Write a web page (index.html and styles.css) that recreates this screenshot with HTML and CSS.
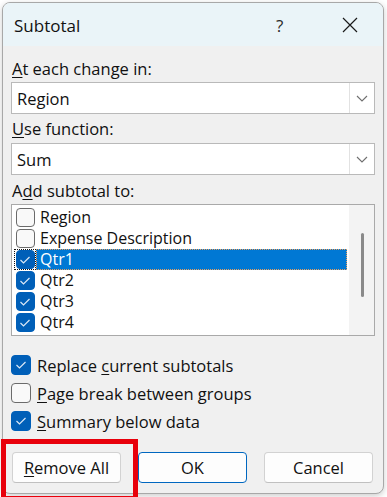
FILE: index.html
```html
<!DOCTYPE html>
<html>
<head>
<meta charset="utf-8">
<link rel="stylesheet" href="styles.css">
</head>
<body>
<div class="dialog">
  <div class="titlebar">
    <span class="title">Subtotal</span>
    <span class="help">?</span>
    <span class="close"><svg width="16" height="16" viewBox="0 0 16 16"><path d="M1 1 L15 15 M15 1 L1 15" stroke="#1a1a1a" stroke-width="1.2" fill="none"/></svg></span>
  </div>
  <div class="content">
    <div class="lbl l1"><u>A</u>t each change in:</div>
    <div class="select"><span class="val">Region</span><span class="drop"><svg width="12" height="7" viewBox="0 0 12 7"><path d="M1 1 L6 6 L11 1" stroke="#707070" stroke-width="1.1" fill="none"/></svg></span></div>
    <div class="lbl l2"><u>U</u>se function:</div>
    <div class="select"><span class="val">Sum</span><span class="drop"><svg width="12" height="7" viewBox="0 0 12 7"><path d="M1 1 L6 6 L11 1" stroke="#707070" stroke-width="1.1" fill="none"/></svg></span></div>
    <div class="lbl l3">A<u>d</u>d subtotal to:</div>
    <div class="list">
      <div class="items">
        <div class="row"><span class="cell"><span class="cb"></span></span><span class="txt">Region</span></div>
        <div class="row"><span class="cell"><span class="cb"></span></span><span class="txt">Expense Description</span></div>
        <div class="row focus"><span class="cell"><span class="cb on"><svg width="12" height="10" viewBox="0 0 12 10"><path d="M1.5 5 L4.5 8 L10.5 2" stroke="#dbe8f6" stroke-width="1.2" fill="none"/></svg></span></span><span class="txt">Qtr1</span></div>
        <div class="row"><span class="cell"><span class="cb on"><svg width="12" height="10" viewBox="0 0 12 10"><path d="M1.5 5 L4.5 8 L10.5 2" stroke="#dbe8f6" stroke-width="1.2" fill="none"/></svg></span></span><span class="txt">Qtr2</span></div>
        <div class="row"><span class="cell"><span class="cb on"><svg width="12" height="10" viewBox="0 0 12 10"><path d="M1.5 5 L4.5 8 L10.5 2" stroke="#dbe8f6" stroke-width="1.2" fill="none"/></svg></span></span><span class="txt">Qtr3</span></div>
        <div class="row"><span class="cell"><span class="cb on"><svg width="12" height="10" viewBox="0 0 12 10"><path d="M1.5 5 L4.5 8 L10.5 2" stroke="#dbe8f6" stroke-width="1.2" fill="none"/></svg></span></span><span class="txt">Qtr4</span></div>
      </div>
      <div class="scroll"><div class="thumb"></div></div>
    </div>
    <div class="opts">
      <div class="opt"><span class="cb on"><svg width="12" height="10" viewBox="0 0 12 10"><path d="M1.5 5 L4.5 8 L10.5 2" stroke="#dbe8f6" stroke-width="1.2" fill="none"/></svg></span><span>Replace <u>c</u>urrent subtotals</span></div>
      <div class="opt"><span class="cb"></span><span><u>P</u>age break between groups</span></div>
      <div class="opt"><span class="cb on"><svg width="12" height="10" viewBox="0 0 12 10"><path d="M1.5 5 L4.5 8 L10.5 2" stroke="#dbe8f6" stroke-width="1.2" fill="none"/></svg></span><span><u>S</u>ummary below data</span></div>
    </div>
    <div class="buttons">
      <div class="btn"><u>R</u>emove All</div>
      <div class="btn primary">OK</div>
      <div class="btn">Cancel</div>
    </div>
  </div>
</div>
<div class="mark"></div>
</body>
</html>
```
FILE: styles.css
```css
* { box-sizing: border-box; }
html, body { margin: 0; padding: 0; }
body {
  width: 387px;
  height: 497px;
  overflow: hidden;
  background: #ffffff;
  padding: 2px 0 0 2px;
  position: relative;
  font-family: "Open Sans", "Noto Sans", sans-serif;
  font-size: 16.5px;
  color: #111;
}
u { text-decoration: underline; text-underline-offset: 2px; text-decoration-thickness: 1px; }
.dialog {
  width: 382px;
  height: 492px;
  border: 1px solid #a8a8a8;
  border-radius: 8px;
  overflow: hidden;
  background: #f0f0f0;
  box-shadow: 0 2px 6px rgba(0,0,0,0.2);
}
.titlebar {
  height: 43px;
  background: #eaf4f8;
  display: flex;
  align-items: center;
  padding-left: 11px;
}
.title { font-size: 17px; flex: 1; padding-top: 2px; }
.help { font-size: 17px; width: 20px; margin-right: 46px; color: #2a2a2a; padding-top: 2px; }
.close { width: 16px; height: 16px; margin-right: 25px; display: flex; }
.content { padding: 13px 8px 0 8px; }
.lbl { height: 20px; line-height: 20px; padding-left: 1px; }
.l1 { margin-bottom: 3px; }
.l2 { margin-top: 5px; margin-bottom: 4px; }
.l3 { margin-top: 6px; margin-bottom: 3px; }
.select {
  height: 32px;
  background: #fff;
  border: 1px solid #b9b9b9;
  display: flex;
  align-items: center;
}
.val { flex: 1; padding-left: 5px; }
.drop {
  width: 25px;
  height: 30px;
  border-left: 1px solid #e2e2e2;
  display: flex;
  align-items: center;
  justify-content: center;
  padding-top: 1px;
}
.list {
  height: 132px;
  border: 1px solid #a9a9a9;
  background: #fff;
  display: flex;
}
.items { flex: 1; padding: 2px 2px 0 2px; }
.row { height: 21px; display: flex; align-items: stretch; font-size: 16px; }
.cell {
  width: 22px;
  display: flex;
  align-items: center;
  justify-content: center;
}
.row.focus .cell { outline: 1px dotted #111; outline-offset: -1px; }
.txt { flex: 1; padding-left: 4px; line-height: 20px; }
.row.focus .txt { background: #0078d4; color: #fff; outline: 1px dotted #e8a060; outline-offset: -1px; }
.cb {
  width: 19px;
  height: 19px;
  border: 1px solid #6b6b6b;
  border-radius: 4px;
  background: #f9f9f9;
  display: inline-flex;
  align-items: center;
  justify-content: center;
  flex: none;
}
.cb.on { background: #005fb8; border-color: #005fb8; }
.scroll {
  width: 25px;
  background: #f3f3f3;
  display: flex;
  justify-content: center;
  padding-top: 28px;
}
.thumb { width: 3px; height: 64px; background: #8a8a8a; border-radius: 2px; margin-left: 1px; }
.opts { margin-top: 15px; }
.opt { height: 28px; display: flex; align-items: center; gap: 6px; padding-left: 0; }
.opt .cb { width: 20px; height: 20px; }
.buttons { margin-top: 17px; display: flex; gap: 17px; padding-left: 1px; }
.btn {
  width: 109px;
  height: 31px;
  background: #fdfdfd;
  border: 1px solid #d2d2d2;
  border-bottom-color: #c0c0c0;
  border-radius: 4px;
  display: flex;
  align-items: center;
  justify-content: center;
}
.btn.primary { border: 1px solid #0067c0; }
.mark {
  position: absolute;
  left: 1px;
  top: 439px;
  width: 137px;
  height: 62px;
  border: 5px solid #e8000b;
}
```
